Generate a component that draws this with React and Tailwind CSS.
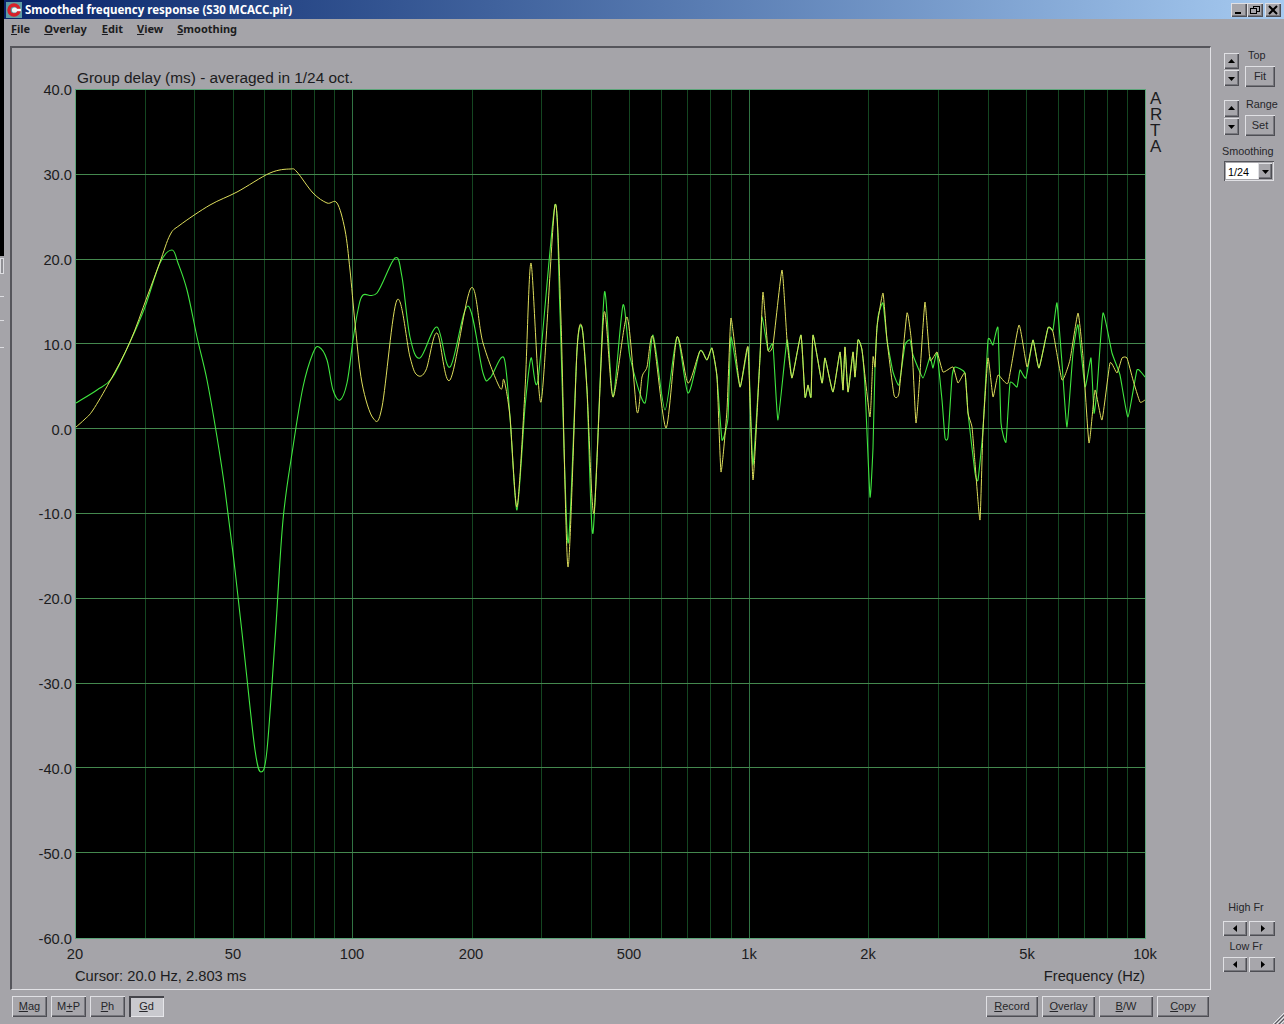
import React from "react";

const F = "font-['Noto_Sans','Liberation_Sans',sans-serif]";
const A = "font-['Liberation_Sans',Arial,sans-serif]";

const yellow = [[76,427],[85,419],[93,410],[110,381],[130,342],[147,297],[160,262],[170,235],[180,225],[210,205],[237,192],[270,173],[290,169],[297,172],[313,193],[327,203],[337,203],[345,230],[350,270],[355,323],[362,383],[373,418],[382,407],[397,300],[410,357],[417,375],[426,370],[437,333],[450,380],[471,288],[483,343],[500,388],[504,380],[510,417],[517,507],[525,390],[531,263],[541,402],[555,205],[561,320],[568,567],[577,350],[582,327],[587,390],[594,513],[604,313],[613,397],[627,317],[637,412],[642,377],[647,367],[653,337],[666,428],[677,337],[688,383],[700,351],[707,360],[712,348],[717,377],[721,472],[727,410],[731,318],[740,387],[748,347],[753,480],[760,357],[763,292],[768,350],[773,345],[782,270],[787,340],[792,378],[801,335],[805,397],[808,385],[811,397],[813,335],[822,383],[825,358],[833,392],[840,352],[843,390],[845,347],[848,392],[853,352],[855,377],[858,340],[862,350],[870,417],[873,357],[875,367],[877,327],[883,293],[887,340],[894,395],[899,393],[907,313],[912,347],[916,423],[920,373],[925,302],[930,360],[937,352],[943,372],[953,367],[958,383],[965,373],[968,413],[972,427],[975,463],[980,520],[983,430],[988,358],[993,397],[998,375],[1008,383],[1019,325],[1027,367],[1033,340],[1039,368],[1048,328],[1053,332],[1062,380],[1070,360],[1078,313],[1083,357],[1089,443],[1095,390],[1102,420],[1110,363],[1117,373],[1122,358],[1127,358],[1133,380],[1140,402],[1145,400]];

const green = [[76,403],[97,390],[112,378],[130,342],[145,307],[160,263],[172,250],[178,263],[187,290],[197,337],[207,380],[217,437],[225,490],[235,570],[245,660],[255,750],[261,772],[267,750],[275,640],[283,520],[293,447],[303,387],[313,353],[319,347],[327,360],[333,390],[340,400],[347,383],[353,340],[358,310],[363,295],[377,293],[395,258],[402,277],[410,337],[420,358],[437,327],[450,367],[468,306],[483,373],[490,378],[504,358],[510,417],[517,510],[525,407],[531,358],[538,380],[555,205],[560,313],[568,543],[577,350],[582,328],[587,390],[593,533],[603,313],[606,300],[613,397],[623,305],[630,357],[645,403],[653,335],[665,410],[677,337],[688,393],[700,351],[707,360],[712,348],[717,377],[722,440],[728,418],[731,337],[740,387],[748,347],[750,393],[753,465],[760,357],[762,317],[768,350],[773,345],[778,420],[787,340],[792,378],[801,335],[805,397],[808,385],[811,397],[813,335],[822,383],[825,358],[833,392],[840,352],[843,390],[845,347],[848,392],[853,352],[855,377],[858,340],[862,350],[865,387],[870,497],[873,448],[875,367],[878,317],[883,303],[887,340],[893,372],[899,385],[905,345],[910,340],[913,355],[923,378],[930,357],[933,368],[937,353],[942,400],[945,438],[948,437],[952,377],[955,367],[965,373],[968,413],[975,473],[978,480],[983,430],[988,340],[993,345],[998,328],[1001,423],[1006,442],[1010,383],[1017,387],[1020,370],[1026,378],[1033,340],[1039,368],[1048,328],[1053,330],[1057,303],[1062,363],[1067,427],[1073,353],[1078,325],[1085,387],[1091,358],[1094,413],[1097,390],[1103,313],[1112,353],[1120,375],[1128,417],[1137,370],[1145,377]];

function smooth(p) {
  let d = `M${p[0][0]} ${p[0][1]}`;
  for (let i = 0; i < p.length - 1; i++) {
    const a = p[Math.max(i - 1, 0)], b = p[i], c = p[i + 1], e = p[Math.min(i + 2, p.length - 1)];
    const k = b[0] > 700 ? 14 : b[0] > 500 ? 8 : 6;
    d += `C${(b[0] + (c[0] - a[0]) / k).toFixed(1)} ${(b[1] + (c[1] - a[1]) / k).toFixed(1)} ${(c[0] - (e[0] - b[0]) / k).toFixed(1)} ${(c[1] - (e[1] - b[1]) / k).toFixed(1)} ${c[0]} ${c[1]}`;
  }
  return d;
}

const X = (f) => 75.2 + 396.8 * Math.log10(f / 20);
const freqs = [30,40,50,60,70,80,90,100,200,300,400,500,600,700,800,900,1000,2000,3000,4000,5000,6000,7000,8000,9000];
const yLabels = ["40.0","30.0","20.0","10.0","0.0","-10.0","-20.0","-30.0","-40.0","-50.0","-60.0"];
const xLabels = [[75,"20"],[233,"50"],[352,"100"],[471,"200"],[629,"500"],[749,"1k"],[868,"2k"],[1027,"5k"],[1145,"10k"]];

function Plot() {
  return (
    <svg width="1071" height="850" viewBox="75 89 1071 850" className="block bg-black shrink-0">
      {freqs.map((f) => {
        const major = f === 100 || f === 1000;
        const x = Math.floor(X(f)) + 0.5;
        return <line key={f} x1={x} x2={x} y1="89" y2="939" stroke={major ? "#317343" : "#144621"} strokeWidth="1" />;
      })}
      {yLabels.slice(1, 10).map((_, i) => {
        const y = Math.floor(89.5 + 84.8 * (i + 1)) + 0.5;
        return <line key={i} x1="75" x2="1146" y1={y} y2={y} stroke="#44884e" strokeWidth="1" />;
      })}
      <rect x="75.5" y="89.5" width="1070" height="849" fill="none" stroke="#5da57a" strokeWidth="1" />
      <path d={smooth(green)} fill="none" stroke="#3fe63f" strokeWidth="1.1" />
      <path d={smooth(yellow)} fill="none" stroke="#dede5c" strokeWidth="1" />
    </svg>
  );
}

const raised = "shadow-[inset_1px_1px_0_#e0e0e4,inset_-1px_-1px_0_#4e4e54,inset_-2px_-2px_0_#77777d]";

function Tri({ dir, size = 7 }) {
  const pts = { up: "0,5 3.5,1 7,5", down: "0,2 3.5,6 7,2", left: "5,0 1,3.5 5,7", right: "2,0 6,3.5 2,7" }[dir];
  return (
    <svg width={size} height={size} viewBox="0 0 7 7" className="block">
      <polygon points={pts} fill="#000" />
    </svg>
  );
}

function Arrow({ dir, className }) {
  return (
    <div className={`flex items-center justify-center bg-[#a7a6ab] ${raised} ${className}`}>
      <Tri dir={dir} />
    </div>
  );
}

function Btn({ children, className, active }) {
  return (
    <div className={`flex items-center justify-center text-[11px] text-[#26262a] ${A} ${active ? "bg-[#c9c9ce] shadow-[inset_2px_2px_0_#45454b,inset_-1px_-1px_0_#e6e6ea]" : `bg-[#a7a6ab] ${raised}`} ${className}`}>
      <span>{children}</span>
    </div>
  );
}

function Spin({ h = "h-[16px]" }) {
  return (
    <div className="flex flex-col gap-[1px] w-[15px] ml-[1px]">
      <Arrow dir="up" className={h} />
      <Arrow dir="down" className={h} />
    </div>
  );
}

function MenuItem({ u, rest, className }) {
  return <span className={className}><u>{u}</u>{rest}</span>;
}

function AppIcon() {
  return (
    <svg width="16" height="16" viewBox="0 0 16 16" className="block shrink-0">
      <rect width="16" height="16" fill="#5f9ca3" />
      <circle cx="8" cy="8" r="5" fill="none" stroke="#d8202a" strokeWidth="3.4" />
      <circle cx="8.5" cy="8" r="2.6" fill="#f4f4f4" />
      <rect x="10" y="6.8" width="5" height="2.4" fill="#f4f4f4" />
    </svg>
  );
}

function CapBtn({ children }) {
  return (
    <div className={`w-[16px] h-[14px] flex items-center justify-center bg-[#a7a6ab] ${raised}`}>
      <svg width="12" height="10" viewBox="0 0 12 10" className="block">{children}</svg>
    </div>
  );
}

export default function App() {
  return (
    <div className="w-[1284px] h-[1024px] overflow-hidden flex bg-[#a5a4a9]">
      {/* desktop sliver at the far left */}
      <div className="w-[4px] shrink-0 flex flex-col">
        <div className="h-[256px] bg-black" />
        <div className="h-[16px] mt-[2px] border border-[#dcdce0] bg-[#8f8f94]" />
        <div className="h-[1px] mt-[22px] bg-[#dcdce0]" />
        <div className="h-[1px] mt-[23px] bg-[#dcdce0]" />
        <div className="h-[1px] mt-[26px] bg-[#dcdce0]" />
      </div>

      <div className="flex-1 flex flex-col min-w-0">
        {/* title bar */}
        <div className="h-[19px] shrink-0 flex items-center pl-[2px] pr-[3px] bg-gradient-to-r from-[#0a246a] to-[#a6caf0]">
          <AppIcon />
          <span className={`ml-[3px] text-[11.5px] font-bold text-white whitespace-nowrap ${F}`}>Smoothed frequency response (S30 MCACC.pir)</span>
          <div className="ml-auto flex items-center">
            <CapBtn><rect x="2" y="7" width="6" height="2" fill="#000" /></CapBtn>
            <CapBtn>
              <rect x="4.5" y="1.5" width="6" height="5" fill="none" stroke="#000" />
              <rect x="1.5" y="3.5" width="6" height="5" fill="#a7a6ab" stroke="#000" />
            </CapBtn>
            <div className="w-[2px]" />
            <CapBtn><path d="M2 1 L10 9 M10 1 L2 9" stroke="#000" strokeWidth="2" /></CapBtn>
          </div>
        </div>

        {/* menu */}
        <div className={`h-[20px] shrink-0 flex items-center pl-[7px] text-[11px] font-bold text-[#1c1c20] ${F}`}>
          <MenuItem u="F" rest="ile" />
          <MenuItem u="O" rest="verlay" className="ml-[14px]" />
          <MenuItem u="E" rest="dit" className="ml-[15px]" />
          <MenuItem u="V" rest="iew" className="ml-[14px]" />
          <MenuItem u="S" rest="moothing" className="ml-[14px]" />
        </div>

        {/* work area */}
        <div className="h-[950px] shrink-0 flex mt-[7px]">
          {/* chart panel */}
          <div className={`ml-[6px] w-[1201px] shrink-0 h-[944px] border-l-2 border-t-2 border-l-[#55555b] border-t-[#55555b] border-r border-b border-r-[#e2e2e6] border-b-[#e2e2e6] ${A} text-[#1c1c20]`}>
            <div className="h-[41px] pl-[65px] pt-[20px] text-[15.4px] leading-[20px] whitespace-nowrap">Group delay (ms) - averaged in 1/24 oct.</div>
            <div className="flex">
              <div className="w-[63px] h-[850px] flex flex-col justify-between text-[14.7px] pt-[1px] pr-[3px]">
                {yLabels.map((l) => (
                  <div key={l} className="h-0 flex items-center justify-end whitespace-nowrap">{l}</div>
                ))}
              </div>
              <Plot />
              <div className="ml-[4px] w-[20px] flex flex-col text-[17px] leading-[16px] pt-[2px] h-[70px]">
                <span>A</span>
                <span>R</span>
                <span>T</span>
                <span>A</span>
              </div>
            </div>
            <div className="relative h-[28px] text-[14.7px]">
              {xLabels.map(([x, l]) => (
                <span key={l} className="absolute top-[4px] -translate-x-1/2 whitespace-nowrap" style={{ left: `${x - 12}px` }}>{l}</span>
              ))}
            </div>
            <div className="flex justify-between pl-[63px] pr-[65px] text-[14.7px] leading-[18px]">
              <span>Cursor: 20.0 Hz, 2.803 ms</span>
              <span>Frequency (Hz)</span>
            </div>
          </div>

          {/* side controls */}
          <div className={`flex-1 min-w-0 flex flex-col pl-[12px] pt-[7px] text-[10.8px] leading-[13px] text-[#26262a] ${A}`}>
            <div className="flex h-[33px] items-start">
              <Spin />
              <div className="ml-[6px] w-[30px] flex flex-col -mt-[4px]">
                <span className="h-[17px] pl-[3px]">Top</span>
                <Btn className="w-[30px] h-[21px]">Fit</Btn>
              </div>
            </div>
            <div className="flex h-[35px] items-start mt-[14px]">
              <Spin h="h-[17px]" />
              <div className="ml-[6px] w-[30px] flex flex-col -mt-[2px]">
                <span className="h-[17px] whitespace-nowrap pl-[1px]">Range</span>
                <Btn className="w-[30px] h-[21px]">Set</Btn>
              </div>
            </div>
            <div className="mt-[10px] -ml-[1px] whitespace-nowrap">Smoothing</div>
            <div className="mt-[3px] ml-[1px] w-[50px] h-[20px] flex items-center p-[2px] bg-[#a7a6ab] shadow-[inset_1px_1px_0_#55555b,inset_-1px_-1px_0_#e0e0e4]">
              <div className="w-[32px] h-[16px] bg-white text-black flex items-center pl-[2px] pt-[2px]">1/24</div>
              <Arrow dir="down" className="w-[14px] h-[16px]" />
            </div>
            <div className="flex-1" />
            <div className="text-center w-[44px] ml-[1px] mb-[7px] whitespace-nowrap">High Fr</div>
            <div className="flex w-[52px] gap-[2px]">
              <Arrow dir="left" className="w-[24px] h-[15px]" />
              <Arrow dir="right" className="w-[26px] h-[15px]" />
            </div>
            <div className="text-center w-[44px] ml-[1px] mt-[4px] mb-[4px] whitespace-nowrap">Low Fr</div>
            <div className="flex w-[52px] gap-[2px] mb-[24px]">
              <Arrow dir="left" className="w-[24px] h-[15px]" />
              <Arrow dir="right" className="w-[26px] h-[15px]" />
            </div>
          </div>
        </div>

        {/* bottom buttons */}
        <div className="flex-1 flex relative pl-[8px]">
          <div className="flex gap-[4px]">
            <Btn className="w-[35px] h-[21px]"><u>M</u>ag</Btn>
            <Btn className="w-[35px] h-[21px]">M<u>+</u>P</Btn>
            <Btn className="w-[35px] h-[21px]"><u>P</u>h</Btn>
            <Btn active className="w-[35px] h-[21px]"><u>G</u>d</Btn>
          </div>
          <div className="ml-[822px] flex gap-[4px]">
            <Btn className="w-[52px] h-[21px]"><u>R</u>ecord</Btn>
            <Btn className="w-[53px] h-[21px]"><u>O</u>verlay</Btn>
            <Btn className="w-[54px] h-[21px]"><u>B</u>/W</Btn>
            <Btn className="w-[52px] h-[21px]"><u>C</u>opy</Btn>
          </div>
          <svg width="11" height="11" viewBox="0 0 11 11" className="absolute right-0 bottom-0">
            <path d="M0 11L11 0M4 11L11 4M8 11L11 8" stroke="#e6e6ea" />
            <path d="M2 11L11 2M6 11L11 6" stroke="#55555b" />
          </svg>
        </div>
      </div>
    </div>
  );
}
